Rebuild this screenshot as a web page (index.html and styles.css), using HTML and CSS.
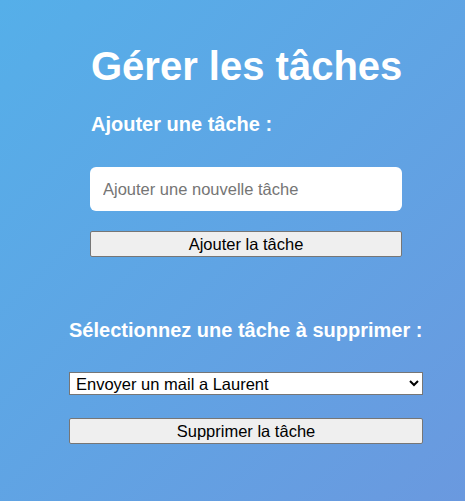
FILE: index.html
```html
<!DOCTYPE html>
<html lang="fr">
<head>
<meta charset="utf-8">
<title>Gérer les tâches</title>
<link rel="stylesheet" href="styles.css">
</head>
<body>
<main class="page">
  <section class="add">
    <h1 class="title">Gérer les tâches</h1>
    <h2 class="subtitle">Ajouter une tâche :</h2>
    <input class="task-input" type="text" placeholder="Ajouter une nouvelle tâche">
    <button class="btn btn-add" type="button">Ajouter la tâche</button>
  </section>
  <section class="remove">
    <h2 class="subtitle">Sélectionnez une tâche à supprimer :</h2>
    <select class="task-select">
      <option>Envoyer un mail a Laurent</option>
    </select>
    <button class="btn btn-remove" type="button">Supprimer la tâche</button>
  </section>
</main>
</body>
</html>
```
FILE: styles.css
```css
html, body {
  margin: 0;
  padding: 0;
  height: 100%;
}
body {
  background: linear-gradient(135deg, #55afe9 0%, #6a99df 100%);
  font-family: "Liberation Sans", Arial, sans-serif;
  color: #fff;
}
.page {
  display: flex;
  flex-direction: column;
  align-items: center;
  padding-left: 27px;
  padding-top: 44px;
}
.add {
  width: 312px;
  display: flex;
  flex-direction: column;
}
.title {
  margin: 0 0 24px 1px;
  font-size: 40px;
  font-weight: bold;
  white-space: nowrap;
}
.subtitle {
  margin: 0;
  font-size: 20px;
  font-weight: bold;
  white-space: nowrap;
}
.add .subtitle {
  margin-left: 1px;
  margin-bottom: 31px;
}
.task-input {
  box-sizing: border-box;
  height: 44px;
  width: 100%;
  border: none;
  border-radius: 6px;
  padding: 0 13px;
  font-family: "Liberation Sans", Arial, sans-serif;
  font-size: 16.5px;
  color: #000;
  background: #fff;
  outline: none;
}
.task-input::placeholder {
  color: #757575;
}
.btn {
  box-sizing: border-box;
  height: 26px;
  width: 100%;
  background: #efefef;
  border: 1px solid #767676;
  border-radius: 2px;
  font-family: "Liberation Sans", Arial, sans-serif;
  font-size: 16.5px;
  color: #000;
  padding: 0;
}
.btn-add {
  margin-top: 20px;
}
.remove {
  width: 354px;
  margin-top: 62px;
  display: flex;
  flex-direction: column;
}
.remove .subtitle {
  margin-bottom: 30px;
}
.task-select {
  box-sizing: border-box;
  height: 23px;
  width: 100%;
  font-family: "Liberation Sans", Arial, sans-serif;
  font-size: 16.5px;
  color: #000;
  background: #fff;
  border: 1px solid #767676;
  border-radius: 0;
  padding: 0 2px;
}
.btn-remove {
  margin-top: 23px;
}
```
